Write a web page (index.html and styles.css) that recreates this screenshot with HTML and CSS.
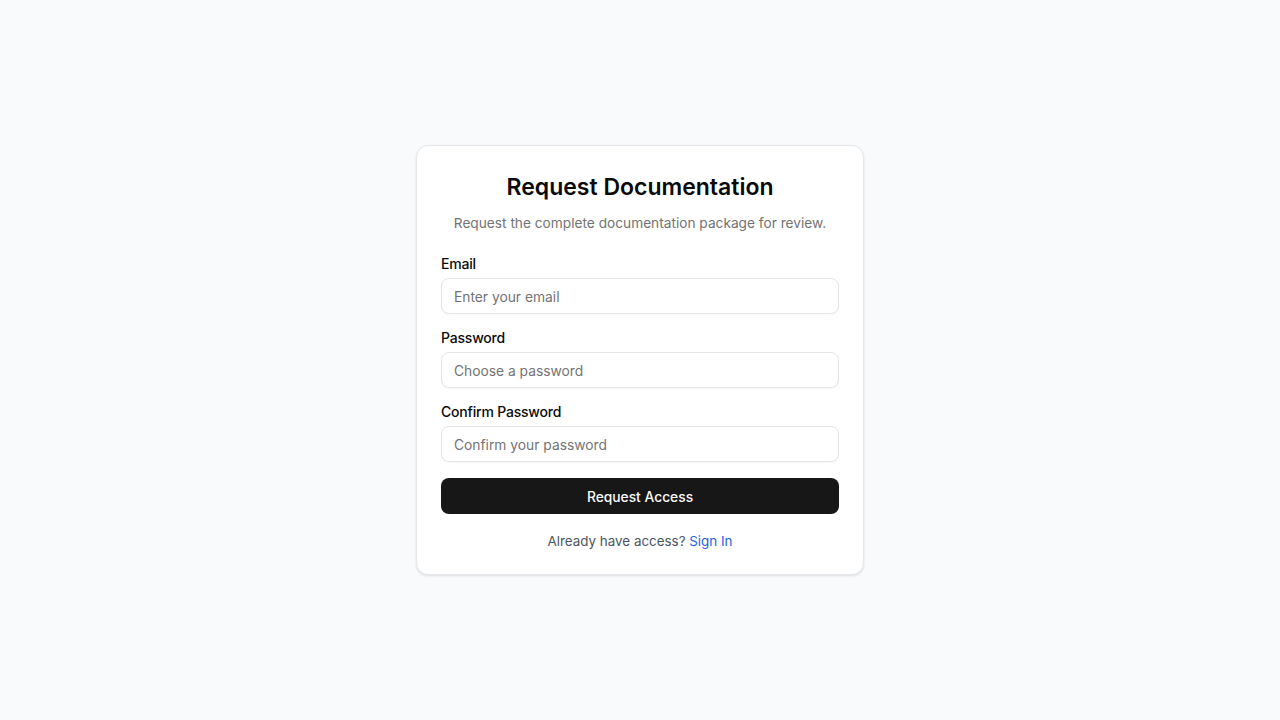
FILE: index.html
```html
<!DOCTYPE html>
<html lang="en">
<head>
<meta charset="utf-8">
<title>Request Documentation</title>
<link rel="stylesheet" href="styles.css">
</head>
<body>
<main class="page">
  <section class="card">
    <h1 class="title">Request Documentation</h1>
    <p class="subtitle">Request the complete documentation package for review.</p>
    <form class="form">
      <div class="field">
        <label class="label" for="email">Email</label>
        <input class="input" id="email" type="email" placeholder="Enter your email">
      </div>
      <div class="field">
        <label class="label" for="password">Password</label>
        <input class="input" id="password" type="password" placeholder="Choose a password">
      </div>
      <div class="field">
        <label class="label" for="confirm">Confirm Password</label>
        <input class="input" id="confirm" type="password" placeholder="Confirm your password">
      </div>
      <button class="button" type="button">Request Access</button>
    </form>
    <p class="footer">Already have access? <a class="link" href="#">Sign In</a></p>
  </section>
</main>
</body>
</html>
```
FILE: styles.css
```css
* { box-sizing: border-box; }
html, body { margin: 0; padding: 0; }
body {
  background: #f9fafb;
  font-family: Inter, "Noto Sans", "Liberation Sans", sans-serif;
  color: #0a0a0a;
}
.page {
  min-height: 100vh;
  display: flex;
  align-items: center;
  justify-content: center;
}
.card {
  width: 448px;
  background: #ffffff;
  border: 1px solid #e5e7eb;
  border-radius: 12px;
  box-shadow: 0 1px 3px rgba(0,0,0,0.08), 0 1px 2px rgba(0,0,0,0.04);
  padding: 25px 24px 23px;
}
.title {
  margin: 0;
  font-size: 23px;
  line-height: 32px;
  font-weight: 600;
  text-align: center;
  color: #0a0a0a;
}
.subtitle {
  margin: 10px 0 0;
  font-size: 13.7px;
  line-height: 20px;
  color: #737373;
  text-align: center;
}
.form {
  margin-top: 21px;
  display: flex;
  flex-direction: column;
  gap: 14px;
}
.field {
  display: flex;
  flex-direction: column;
  gap: 4px;
}
.label {
  font-size: 14px;
  line-height: 20px;
  font-weight: 500;
  letter-spacing: -0.2px;
  color: #0a0a0a;
}
.input {
  height: 36px;
  width: 100%;
  border: 1px solid #e5e5e5;
  border-radius: 8px;
  padding: 2px 12px 0;
  font-family: inherit;
  font-size: 13.8px;
  color: #0a0a0a;
  background: #fff;
  box-shadow: 0 1px 2px rgba(0,0,0,0.03);
  outline: none;
}
.input::placeholder { color: #737373; }
.button {
  margin-top: 2px;
  height: 36px;
  width: 100%;
  border: none;
  border-radius: 8px;
  padding: 2px 0 0;
  background: #171717;
  color: #fafafa;
  font-family: inherit;
  font-size: 13.8px;
  font-weight: 500;
  cursor: pointer;
}
.footer {
  margin: 17px 0 0;
  font-size: 13.4px;
  line-height: 20px;
  color: #4b5563;
  text-align: center;
}
.link {
  color: #2563eb;
  text-decoration: none;
}
```
